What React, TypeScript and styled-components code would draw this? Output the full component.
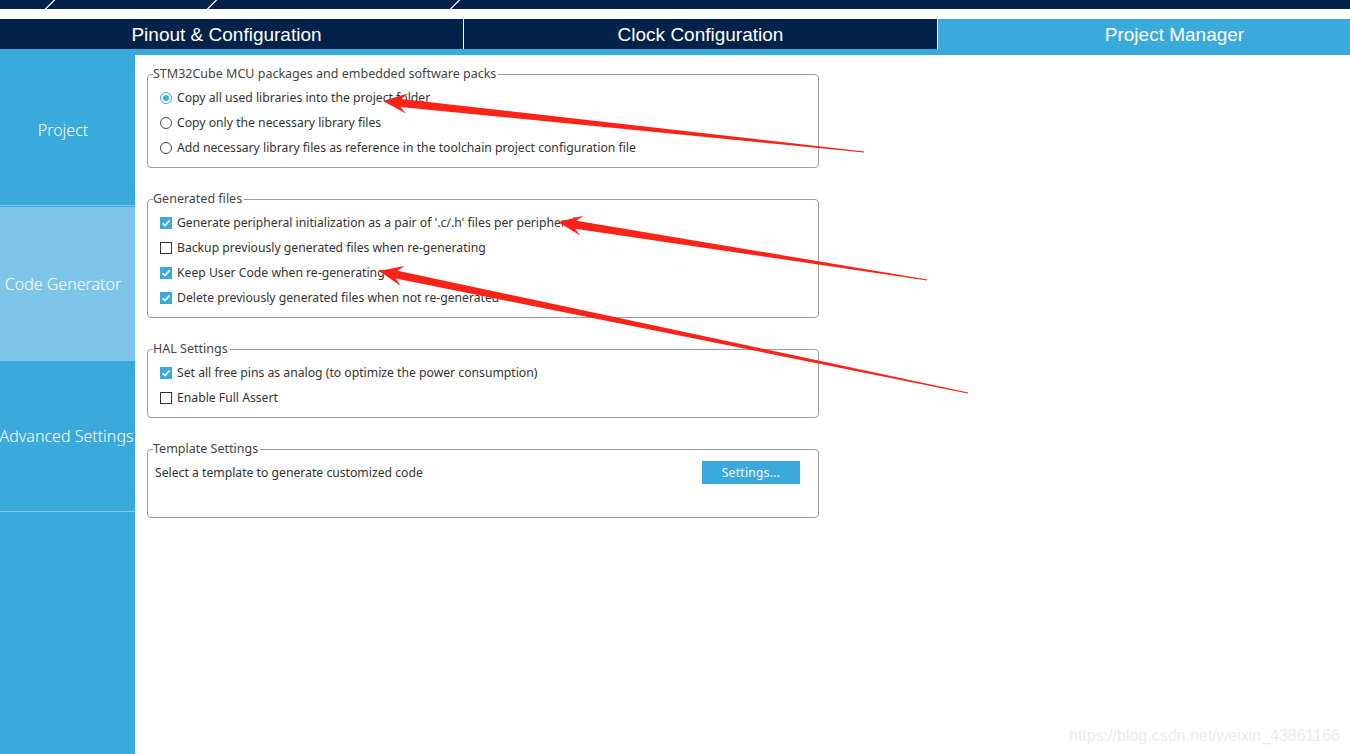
import React from 'react';
import styled, { createGlobalStyle } from 'styled-components';

const GlobalStyle = createGlobalStyle`
  html, body {
    margin: 0;
    padding: 0;
    background: #ffffff;
  }
  body {
    font-family: "Noto Sans", "Liberation Sans", sans-serif;
  }
`;

const NAVY = '#03224a';
const BLUE = '#3aa9db';
const LIGHT = '#7ec6e9';

const Page = styled.div`
  position: relative;
  width: 1350px;
  height: 754px;
  overflow: hidden;
  display: flex;
  flex-direction: column;
`;

const Crumbs = styled.div`
  height: 9px;
  background: ${NAVY};
  flex-shrink: 0;
  svg {
    display: block;
  }
`;

const TabBar = styled.div`
  margin-top: 10px;
  height: 30px;
  background: ${NAVY};
  display: grid;
  grid-template-columns: 474px 474px 474px;
  margin-left: -10px;
  flex-shrink: 0;
`;

const Tab = styled.div<{ $active?: boolean }>`
  background: ${(p) => (p.$active ? BLUE : NAVY)};
  border-right: 1px solid #ffffff;
  color: #ffffff;
  font-family: "Liberation Sans", Arial, sans-serif;
  font-size: 19px;
  padding-top: 2px;
  box-sizing: border-box;
  display: flex;
  align-items: center;
  justify-content: center;
`;

const Strip = styled.div`
  height: 6px;
  background: ${BLUE};
  flex-shrink: 0;
`;

const Body = styled.div`
  flex: 1;
  display: flex;
`;

const Sidebar = styled.div`
  width: 135px;
  background: ${BLUE};
  display: flex;
  flex-direction: column;
`;

const SideItem = styled.div<{ $active?: boolean; $h: number; $line?: boolean; $gap?: number; $pr?: number }>`
  height: ${(p) => p.$h}px;
  flex-shrink: 0;
  box-sizing: border-box;
  background: ${(p) => (p.$active ? LIGHT : BLUE)};
  border-bottom: ${(p) => (p.$line ? '1px solid #86ccec' : 'none')};
  margin-bottom: ${(p) => p.$gap ?? 0}px;
  padding-right: ${(p) => p.$pr ?? 9}px;
  color: #ffffff;
  font-size: 16px;
  font-family: "Noto Sans", sans-serif;
  font-weight: 300;
  display: flex;
  align-items: center;
  justify-content: center;
  white-space: nowrap;
`;

const Content = styled.div`
  padding: 0 0 0 12px;
  width: 672px;
`;

const Group = styled.fieldset<{ $top: number; $minH?: number }>`
  margin: ${(p) => p.$top}px 0 0 0;
  padding: 3px 12px 7px 12px;
  border: 1px solid #9a9ea3;
  border-radius: 4px;
  min-height: ${(p) => p.$minH ?? 0}px;
  box-sizing: border-box;
`;

const Legend = styled.legend`
  padding: 0 2px 0 0;
  font-size: 12.5px;
  line-height: 16px;
  color: #444;
  margin-left: -7px;
`;

const Row = styled.label`
  height: 25px;
  display: flex;
  align-items: center;
  gap: 5px;
  font-size: 12.2px;
  color: #333;
  white-space: nowrap;
`;

const Radio = styled.span<{ $on?: boolean }>`
  width: 12px;
  height: 12px;
  box-sizing: border-box;
  border-radius: 50%;
  border: 1px solid ${(p) => (p.$on ? BLUE : '#444')};
  display: inline-flex;
  align-items: center;
  justify-content: center;
  &::after {
    content: '';
    width: 6px;
    height: 6px;
    border-radius: 50%;
    background: ${(p) => (p.$on ? BLUE : 'transparent')};
  }
`;

const Check = styled.span<{ $on?: boolean }>`
  width: 12px;
  height: 12px;
  box-sizing: border-box;
  border: 1px solid ${(p) => (p.$on ? BLUE : '#333')};
  background: ${(p) => (p.$on ? BLUE : '#fff')};
  display: inline-flex;
  align-items: center;
  justify-content: center;
`;

const TemplateRow = styled.div`
  display: flex;
  justify-content: space-between;
  align-items: flex-start;
  margin: 0 6px 0 -5px;
  font-size: 12.2px;
  color: #333;
`;

const TemplateText = styled.span`
  line-height: 25px;
`;

const SettingsButton = styled.button`
  margin-top: 1px;
  width: 98px;
  height: 23px;
  border: none;
  background: ${BLUE};
  color: #fff;
  font-family: "Noto Sans", sans-serif;
  font-size: 12px;
  letter-spacing: 0.3px;
`;

const Overlay = styled.svg`
  position: absolute;
  left: 0;
  top: 0;
  pointer-events: none;
`;

const Watermark = styled.div`
  position: absolute;
  right: 10px;
  bottom: 9px;
  font-family: "Liberation Sans", Arial, sans-serif;
  font-size: 16px;
  color: #ececec;
`;

const Tick = () => (
  <svg width="10" height="10" viewBox="0 0 10 10">
    <path d="M1.5 5.2 L4 7.6 L8.6 2.4" stroke="#fff" strokeWidth="1.6" fill="none" />
  </svg>
);

const arrow = (tx: number, ty: number, hx: number, hy: number) => {
  const dx = hx - tx;
  const dy = hy - ty;
  const len = Math.hypot(dx, dy);
  const ux = dx / len;
  const uy = dy / len;
  const nx = -uy;
  const ny = ux;
  const at = (d: number, w: number) => `${tx + ux * d + nx * w},${ty + uy * d + ny * w}`;
  const shaft = len - 18;
  const wing = len - 24;
  return [
    at(0, 0.6),
    at(shaft, 4),
    at(wing, 10),
    at(len, 0),
    at(wing, -10),
    at(shaft, -4),
    at(0, -0.6),
  ].join(' ');
};

const radios = [
  { t: 'Copy all used libraries into the project folder', on: true },
  { t: 'Copy only the necessary library files', on: false },
  { t: 'Add necessary library files as reference in the toolchain project configuration file', on: false },
];

const generated = [
  { t: "Generate peripheral initialization as a pair of '.c/.h' files per peripheral", on: true },
  { t: 'Backup previously generated files when re-generating', on: false },
  { t: 'Keep User Code when re-generating', on: true },
  { t: 'Delete previously generated files when not re-generated', on: true },
];

const hal = [
  { t: 'Set all free pins as analog (to optimize the power consumption)', on: true },
  { t: 'Enable Full Assert', on: false },
];

export default function App() {
  return (
    <>
      <GlobalStyle />
      <Page>
        <Crumbs>
          <svg width="1350" height="9">
            <path d="M45 9.5 L55 -0.5 M207 9.5 L217 -0.5 M450 9.5 L460 -0.5" stroke="#fff" strokeWidth="1.2" />
          </svg>
        </Crumbs>
        <TabBar>
          <Tab>Pinout &amp; Configuration</Tab>
          <Tab>Clock Configuration</Tab>
          <Tab $active>Project Manager</Tab>
        </TabBar>
        <Strip />
        <Body>
          <Sidebar>
            <SideItem $h={151} $line $gap={1}>Project</SideItem>
            <SideItem $h={154} $active>Code Generator</SideItem>
            <SideItem $h={151} $line $pr={2}>Advanced Settings</SideItem>
          </Sidebar>
          <Content>
            <Group $top={11}>
              <Legend>STM32Cube MCU packages and embedded software packs</Legend>
              {radios.map((r) => (
                <Row key={r.t}>
                  <Radio $on={r.on} />
                  {r.t}
                </Row>
              ))}
            </Group>
            <Group $top={23}>
              <Legend>Generated files</Legend>
              {generated.map((r) => (
                <Row key={r.t}>
                  <Check $on={r.on}>{r.on && <Tick />}</Check>
                  {r.t}
                </Row>
              ))}
            </Group>
            <Group $top={23}>
              <Legend>HAL Settings</Legend>
              {hal.map((r) => (
                <Row key={r.t}>
                  <Check $on={r.on}>{r.on && <Tick />}</Check>
                  {r.t}
                </Row>
              ))}
            </Group>
            <Group $top={23} $minH={77}>
              <Legend>Template Settings</Legend>
              <TemplateRow>
                <TemplateText>Select a template to generate customized code</TemplateText>
                <SettingsButton>Settings...</SettingsButton>
              </TemplateRow>
            </Group>
          </Content>
        </Body>
        <Overlay width="1350" height="754">
          <polygon points={arrow(864, 152, 383, 101)} fill="#fb2218" />
          <polygon points={arrow(927, 280, 558, 222)} fill="#fb2218" />
          <polygon points={arrow(968, 393, 379, 271)} fill="#fb2218" />
        </Overlay>
        <Watermark>https://blog.csdn.net/weixin_43861166</Watermark>
      </Page>
    </>
  );
}
